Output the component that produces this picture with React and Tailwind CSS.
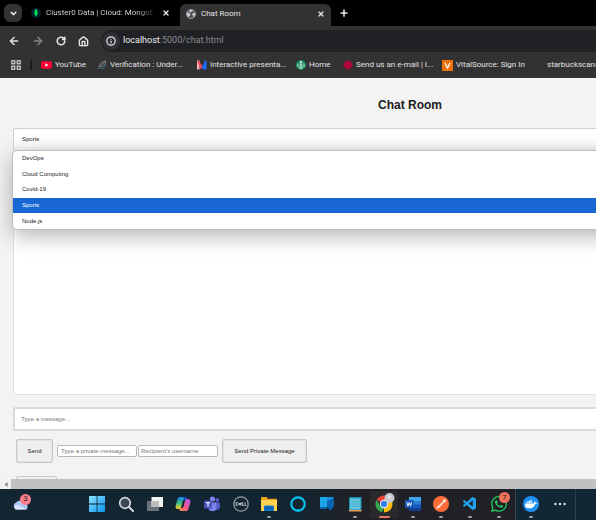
import React from "react";
import { SiWhatsapp, SiDocker } from "react-icons/si";
import { VscVscode } from "react-icons/vsc";
import {
  ArrowLeft,
  ArrowRight,
  RotateCw,
  House,
  Info,
  ChevronDown,
  X,
  Plus,
} from "lucide-react";

const topics = ["DevOps", "Cloud Computing", "Covid-19", "Sports", "Node.js"];

function MongoIcon() {
  return (
    <svg viewBox="0 0 10 10" className="size-[10px] shrink-0" aria-hidden="true">
      <circle cx="5" cy="5" r="5" fill="#03202b" />
      <path d="M5 .8C3.700 2.300 3.300 3.500 3.300 5c0 1.500.8 2.300 1.400 2.900L5 9.300l.3-1.400C6 7.200 6.700 6.400 6.700 5 6.700 3.500 6.200 2.200 5 .8z" fill="#00d95f" />
    </svg>
  );
}

function GlobeIcon() {
  return (
    <svg viewBox="0 0 10 10" className="size-[10px] shrink-0" aria-hidden="true">
      <circle cx="5" cy="5" r="4.500" fill="#4a4d50" stroke="#b4b9bd" strokeWidth=".8" />
      <path d="M1 3.500l2 .2 1.500 1.500-.2 1.300L3.200 7v1.600L1.400 7 .8 5zM4 .8l2.800.1-.6 1.600-1.500.4-.6 1.200-.9-1zM6.400 4.500l2-.8.8 1.300-.6 2-1.500 1-.3-1.700-.8-.8z" fill="#c6cacd" />
    </svg>
  );
}

function AppsIcon() {
  return (
    <svg viewBox="0 0 10 10" className="size-[10px]" fill="none" stroke="#d6d6d6" strokeWidth="1.200" aria-hidden="true">
      <rect x=".8" y=".8" width="3" height="3" />
      <rect x="6.200" y=".8" width="3" height="3" />
      <rect x=".8" y="6.200" width="3" height="3" />
      <rect x="6.200" y="6.200" width="3" height="3" />
    </svg>
  );
}

const bookmarks = [
  {
    label: "YouTube",
    width: "w-[56px]",
    icon: (
      <svg viewBox="0 0 11 10" className="h-[10px] w-[11px] shrink-0" aria-hidden="true">
        <rect x="0" y="1.200" width="11" height="7.600" rx="2" fill="#ff0033" />
        <path d="M4.400 3.200v3.600L7.500 5z" fill="#fff" />
      </svg>
    ),
  },
  {
    label: "Verification : Under...",
    width: "w-[100px]",
    icon: (
      <svg viewBox="0 0 10 10" className="size-[10px] shrink-0" fill="none" aria-hidden="true">
        <path d="M.8 8.800L8.800.8M2.500 7C1.800 4 4.500 2.300 8.800 1c-.5 3.600-2.200 6-5.200 5.500" stroke="#7f8b90" strokeWidth=".9" />
        <path d="M3 8.500h3.500L9 3.500" stroke="#3c7282" strokeWidth=".8" />
      </svg>
    ),
  },
  {
    label: "Interactive presenta...",
    width: "w-[99px]",
    icon: (
      <svg viewBox="0 0 10 10" className="size-[10px] shrink-0" aria-hidden="true">
        <path d="M0 .5h2.500v9H0z" fill="#ffb0b8" />
        <path d="M0 .5h1.600l4 6L4 9.500z" fill="#f7465f" />
        <path d="M4 4.500l1.500 2L8 .5h1.500v9H6z" fill="#196cff" />
      </svg>
    ),
  },
  {
    label: "Home",
    width: "w-[47px]",
    icon: (
      <svg viewBox="0 0 10 10" className="size-[10px] shrink-0" aria-hidden="true">
        <circle cx="5" cy="5" r="5" fill="#15875a" />
        <path d="M3.600 1.800L5 1l1.400.8-.2 1.500H3.800zM3.900 3.800h2.200L6.500 9h-3zM1.600 3.400h.9v4.200l-1.100-1zM7.500 3.400h.9l.2 3.200-1.100 1z" fill="#cce7dc" />
        <path d="M5 4.500V9" stroke="#15875a" strokeWidth=".6" />
      </svg>
    ),
  },
  {
    label: "Send us an e-mail | I...",
    width: "w-[99px]",
    icon: (
      <svg viewBox="0 0 10 10" className="size-[10px] shrink-0" aria-hidden="true">
        <path d="M5 0l1.600 1.500L8.500 1.700l.1 1.800L10 5 8.600 6.500l-.3 1.800-1.800.3L5 10 3.500 8.600l-1.800-.3-.3-1.800L0 5l1.400-1.500.1-1.800 1.900-.2z" fill="#ad0638" />
      </svg>
    ),
  },
  {
    label: "VitalSource: Sign In",
    width: "w-[105px]",
    icon: (
      <svg viewBox="0 0 11 11" className="size-[11px] shrink-0" aria-hidden="true">
        <rect width="11" height="11" fill="#ed7009" />
        <path d="M3 3l2.500 5L8 3" stroke="#fff" strokeWidth="1.300" fill="none" />
      </svg>
    ),
  },
  { label: "starbuckscana", width: "w-[70px]", icon: null },
];

function BrowserChrome() {
  return (
    <header className="shrink-0 bg-[#323232] font-['Roboto','Noto_Sans',sans-serif] text-[#e3e3e3]">
      <div className="flex h-[26px] bg-black pl-1">
        <button aria-label="Search tabs" className="mt-1 flex size-[18px] shrink-0 items-center justify-center rounded-md bg-[#333]">
          <ChevronDown className="size-[9px]" strokeWidth={4} />
        </button>
        <div className="flex w-[158px] shrink-0 items-center gap-[5px] pl-[9px] pr-[10px]">
          <MongoIcon />
          <span className="flex-1 overflow-hidden whitespace-nowrap bg-linear-to-r from-[#dedede] from-85% to-[#333] bg-clip-text text-[8px] text-transparent">
            Cluster0 Data | Cloud: MongoD
          </span>
          <button aria-label="Close Cluster0 Data" className="ml-1">
            <X className="size-[8px]" strokeWidth={4} />
          </button>
        </div>
        <div className="mt-1 flex w-[151px] shrink-0 items-center gap-[5px] rounded-t-md bg-[#323232] pb-[3px] pl-[6px] pr-[6px]">
          <GlobeIcon />
          <span className="flex-1 text-[8px]">Chat Room</span>
          <button aria-label="Close Chat Room">
            <X className="size-[8px]" strokeWidth={4} />
          </button>
        </div>
        <button aria-label="New tab" className="ml-[8px]">
          <Plus className="size-[10px]" strokeWidth={4} />
        </button>
      </div>
      <div className="flex h-[30px] items-center pl-[8px]">
        <nav className="flex shrink-0 items-center gap-[12px]" aria-label="Navigation">
          <button aria-label="Back"><ArrowLeft className="size-[12px]" strokeWidth={3} /></button>
          <button aria-label="Forward" className="text-[#858585]"><ArrowRight className="size-[12px]" strokeWidth={3} /></button>
          <button aria-label="Reload"><RotateCw className="size-[10px]" strokeWidth={4} /></button>
          <button aria-label="Home"><House className="size-[11px]" strokeWidth={3} /></button>
        </nav>
        <div className="ml-[12px] flex h-[22px] flex-1 items-center gap-[3px] rounded-l-full bg-[#202124] pl-[1px]">
          <span className="flex size-[18px] items-center justify-center rounded-full bg-[#303134]">
            <Info className="size-[10px]" strokeWidth={3} />
          </span>
          <span className="text-[9px] text-[#8a8c8f]">
            <span className="text-[#eeeeee]">localhost</span>:5000/chat.html
          </span>
        </div>
      </div>
      <nav className="flex h-[22px] items-start overflow-hidden pl-[11px] pt-1" aria-label="Bookmarks">
        <span className="flex h-[10px] w-[21px] shrink-0 items-center justify-between">
          <AppsIcon />
          <span className="h-[10px] w-[2px] bg-[#1c1c1c]" />
        </span>
        <div className="ml-[9px] flex">
          {bookmarks.map((b) => (
            <a key={b.label} href="#" className={`flex h-[10px] shrink-0 items-center gap-[3px] whitespace-nowrap text-[8px] ${b.width}`}>
              {b.icon}
              {b.label}
            </a>
          ))}
        </div>
      </nav>
    </header>
  );
}

function ChatPage() {
  return (
    <main className="min-h-0 flex-1 overflow-hidden border-t border-[#fafafa] bg-[#f3f3f3] font-['Liberation_Sans',Arial,sans-serif] text-[6px] text-[#222]">
      <div className="w-[820px] px-[13px] pt-[18px]">
        <h1 className="text-center text-[12px] font-bold leading-4 text-[#1c1c1c]">Chat Room</h1>
        <div className="relative mt-[15px]">
          <select
            aria-label="Room"
            defaultValue="Sports"
            className="block h-[23px] w-full appearance-none rounded-xs border border-[#d0d0d0] bg-linear-to-b from-white from-60% to-[#f4f4f4] px-2 text-[6px]"
          >
            {topics.map((t) => (
              <option key={t}>{t}</option>
            ))}
          </select>
          <div role="listbox" aria-label="Rooms" className="absolute inset-x-0 top-full z-10 flex h-[78px] flex-col rounded-sm bg-white shadow-[0_0_0_1px_#bdbdbd,0_6px_22px_rgba(0,0,0,0.32)]">
            {topics.map((t) => (
              <button
                key={t}
                role="option"
                aria-selected={t === "Sports"}
                className={`flex flex-1 items-center px-[9px] text-left ${t === "Sports" ? "bg-[#1967d2] text-white" : ""}`}
              >
                {t}
              </button>
            ))}
          </div>
        </div>
        <div className="mt-[6px] h-[238px] rounded-xs border border-[#e2e2e2] bg-white" />
        <input
          aria-label="Message"
          placeholder="Type a message..."
          className="mt-3 block h-6 w-full rounded-xs border-2 border-[#dadada] bg-white px-[6px] placeholder:text-[#777]"
        />
        <div className="mt-2 flex items-center pl-[3px]">
          <button className="h-6 w-[37px] rounded-xs border border-[#c8c8c8] bg-[#efefef] shadow-[inset_0_0_0_1px_#e2e2e2]">Send</button>
          <input
            aria-label="Private message"
            placeholder="Type a private message..."
            className="ml-[4px] h-3 w-[80px] rounded-xs border border-[#b8b8b8] bg-white px-[3px] placeholder:text-[#777]"
          />
          <input
            aria-label="Recipient"
            placeholder="Recipient's username"
            className="ml-[1px] h-3 w-[80px] rounded-xs border border-[#b8b8b8] bg-white px-[2px] placeholder:text-[#777]"
          />
          <button className="ml-1 h-6 w-[85px] rounded-xs border border-[#c8c8c8] bg-[#efefef] shadow-[inset_0_0_0_1px_#e2e2e2]">
            Send Private Message
          </button>
        </div>
        <button aria-label="Leave room" className="ml-[3px] mt-[13px] block h-6 w-[41px] rounded-xs border border-[#c8c8c8] bg-[#efefef]" />
      </div>
    </main>
  );
}

function WindowsIcon() {
  return (
    <svg viewBox="0 0 16 16" className="size-4" aria-hidden="true">
      <defs>
        <linearGradient id="win" x1="0" y1="0" x2="1" y2="1">
          <stop stopColor="#8ce3ff" />
          <stop offset="1" stopColor="#0693ee" />
        </linearGradient>
      </defs>
      <path d="M0 0h7.600v7.600H0zM8.400 0H16v7.600H8.400zM0 8.400h7.600V16H0zM8.400 8.400H16V16H8.400z" fill="url(#win)" />
    </svg>
  );
}

function SearchIcon() {
  return (
    <svg viewBox="0 0 16 16" className="size-4" fill="none" aria-hidden="true">
      <circle cx="7" cy="7" r="5.300" fill="#3a4853" stroke="#d5d9dc" strokeWidth="1.700" />
      <path d="M11 11l4 4" stroke="#d5d9dc" strokeWidth="2" strokeLinecap="round" />
    </svg>
  );
}

function TaskViewIcon() {
  return (
    <svg viewBox="0 0 16 16" className="size-4" aria-hidden="true">
      <rect x="0" y="5" width="12" height="10" fill="#69727a" />
      <rect x="4.500" y="1" width="11.500" height="10" fill="#f2f2f2" />
      <rect x="4.500" y="5" width="7.500" height="6" fill="#bebebe" />
    </svg>
  );
}

function CopilotIcon() {
  return (
    <svg viewBox="0 0 16 16" className="size-4" aria-hidden="true">
      <defs>
        <linearGradient id="cop1" x1="0" y1="0" x2="0" y2="1">
          <stop stopColor="#1684e8" />
          <stop offset=".5" stopColor="#39bd82" />
          <stop offset="1" stopColor="#ffcf27" />
        </linearGradient>
        <linearGradient id="cop2" x1="1" y1="0" x2="0" y2="1">
          <stop stopColor="#a95cf4" />
          <stop offset=".5" stopColor="#ef5795" />
          <stop offset="1" stopColor="#ff8a3d" />
        </linearGradient>
      </defs>
      <path d="M5 1h5c1.300 0 1.600 1 2 2.200L8 4.500 6.200 11c-.4 1.300-1 2-2.200 2H2.600C.6 13 .2 11 .8 9l1.700-5.700C3 1.700 3.700 1 5 1z" fill="url(#cop1)" />
      <path d="M11 15H6c-1.300 0-1.600-1-2-2.200L8 11.500 9.800 5c.4-1.300 1-2 2.200-2h1.400c2 0 2.400 2 1.800 4l-1.700 5.700C13 14.300 12.300 15 11 15z" fill="url(#cop2)" />
      <path d="M8.700 4.800L6.900 11.200h1.200l1.800-6.400z" fill="#132532" />
      <path d="M8.500 1H10c1.300 0 1.800 1 2.100 2-1.200 0-1.800.7-2.300 1.900L9 4z" fill="#1742c7" />
    </svg>
  );
}

function TeamsIcon() {
  return (
    <svg viewBox="0 0 16 16" className="size-4" aria-hidden="true">
      <circle cx="8.500" cy="3" r="2.600" fill="#7b83eb" />
      <circle cx="13.300" cy="4" r="1.900" fill="#5059c9" />
      <path d="M10 6.500h6v4.300c0 2-1.500 3.200-3.300 3.200H10z" fill="#5059c9" />
      <path d="M4.500 6.500h8v4.800a4 4 0 0 1-8 0z" fill="#7b83eb" />
      <rect x="0" y="4.500" width="8" height="8" rx="1" fill="#4b53bc" />
      <path d="M2 6.700h4M4 6.700v4" stroke="#e8eaff" strokeWidth="1.200" />
    </svg>
  );
}

function DellIcon() {
  return (
    <svg viewBox="0 0 16 16" className="size-4" fill="none" aria-hidden="true">
      <circle cx="8" cy="8" r="7.200" stroke="#929ca4" strokeWidth="1.300" />
      <path d="M3 6.500v3h1c2 0 2-3 0-3zM9 7L7 8l2 1.200M7 8l1.500-1.200M9.700 6.300v3.200h1.500M12 6.300v3.200h1.300M5.800 8L7.600 6.800M5.800 8l1.800 1.400" stroke="#b3bbc1" strokeWidth="1" />
    </svg>
  );
}

function FolderIcon() {
  return (
    <svg viewBox="0 0 16 16" className="size-4" aria-hidden="true">
      <path d="M0 2c0-.7.4-1 1-1h4.500L7 2.800h8c.6 0 1 .4 1 1V13H0z" fill="#e9a21b" />
      <path d="M0 4h16v11H0z" fill="#ffd34f" />
      <path d="M3 15v-4c0-1 .6-1.500 1.500-1.500h7c.9 0 1.500.5 1.500 1.500v4z" fill="#0f73c9" />
      <path d="M4.500 12h7" stroke="#0b4e94" />
    </svg>
  );
}

function AlexaIcon() {
  return (
    <svg viewBox="0 0 16 16" className="size-4" fill="none" aria-hidden="true">
      <circle cx="8" cy="8" r="6.700" stroke="#05c3ef" strokeWidth="2.200" />
      <path d="M7 13.500h2.500v2H7z" fill="#05c3ef" />
    </svg>
  );
}

function DesktopIcon() {
  return (
    <svg viewBox="0 0 16 16" className="size-4" aria-hidden="true">
      <path d="M1 1h13.500v10H1z" fill="#1390dd" />
      <path d="M1 11h7v2H1zM6 6l8.500-4v9L11 15z" fill="#0864ae" />
      <path d="M1 1h7v10H1z" fill="#1ba5e8" />
    </svg>
  );
}

function NotepadIcon() {
  return (
    <svg viewBox="0 0 16 16" className="size-4" aria-hidden="true">
      <rect x="2" y="1" width="12.500" height="14" rx=".5" fill="#1e8fb0" />
      <rect x="3" y="2.500" width="10.500" height="11" fill="#62c4df" />
      <path d="M4.500 5.500h7.500M4.500 8h7.500M4.500 10.500h7.500" stroke="#43a7c5" strokeWidth=".8" />
      <path d="M2 14h12.500v1.500H2z" fill="#e79b5a" />
    </svg>
  );
}

function ChromeIcon() {
  return (
    <svg viewBox="0 0 18 18" className="size-[18px] overflow-visible" aria-hidden="true">
      <path d="M9 9L1.640 4.750A8.500 8.500 0 0 1 16.360 4.750z" fill="#ea4335" />
      <path d="M9 9V17.500A8.500 8.500 0 0 0 16.360 4.750H9z" fill="#fbbc04" />
      <path d="M1.640 4.750L5.400 11.200 9 13l-1.800 4.300A8.500 8.500 0 0 1 1.640 4.750z" fill="#34a853" />
      <circle cx="9" cy="9" r="4.200" fill="#fff" />
      <circle cx="9" cy="9" r="3.200" fill="#347fe9" />
      <circle cx="14.500" cy="3" r="5" fill="#c5c8ce" />
      <circle cx="14.500" cy="2" r="2" fill="#dce0e8" />
    </svg>
  );
}

function WordIcon() {
  return (
    <svg viewBox="0 0 16 16" className="size-4" aria-hidden="true">
      <path d="M4 1h12v14H4z" fill="#185abd" />
      <path d="M4 1h12v4H4z" fill="#41a5ee" />
      <path d="M4 5h12v3.500H4z" fill="#2b7cd3" />
      <path d="M4 12h12v3H4z" fill="#103f91" />
      <rect x="0" y="4" width="8.500" height="8" rx=".5" fill="#1856b5" />
      <path d="M1.800 6.200l1.100 3.900 1.300-3.500 1.300 3.500 1.100-3.900" fill="none" stroke="#fff" strokeWidth=".9" />
    </svg>
  );
}

function PostmanIcon() {
  return (
    <svg viewBox="0 0 16 16" className="size-4" aria-hidden="true">
      <circle cx="8" cy="8" r="8" fill="#ff6c37" />
      <path d="M3 13l1.500-2.500L10.500 5l1.200 1L6 11.800z" fill="#fff" />
      <circle cx="11.600" cy="4.500" r="1.600" fill="#ffe4d9" />
      <path d="M5 11l5.500-5" stroke="#ff6c37" strokeWidth=".4" />
    </svg>
  );
}

function WhatsAppIcon() {
  return (
    <span className="relative flex">
      <SiWhatsapp className="size-4 text-[#24c45d]" />
      <span className="absolute -right-[3px] -top-[4px] flex size-[11px] items-center justify-center rounded-full bg-[#f1735d] text-[8px] leading-none text-[#3d2020]">7</span>
    </span>
  );
}

function DockerIcon() {
  return (
    <span className="flex size-4 items-center justify-center rounded-full bg-[#1f91f3]">
      <SiDocker className="size-[12px] text-white" />
    </span>
  );
}

const apps = [
  { name: "Start", icon: <WindowsIcon /> },
  { name: "Search", icon: <SearchIcon /> },
  { name: "Task view", icon: <TaskViewIcon /> },
  { name: "Copilot", icon: <CopilotIcon /> },
  { name: "Teams", icon: <TeamsIcon /> },
  { name: "Dell", icon: <DellIcon /> },
  { name: "File Explorer", icon: <FolderIcon />, open: true },
  { name: "Alexa", icon: <AlexaIcon /> },
  { name: "Remote desktop", icon: <DesktopIcon /> },
  { name: "Notepad", icon: <NotepadIcon />, open: true },
  { name: "Chrome", icon: <ChromeIcon />, active: true },
  { name: "Word", icon: <WordIcon />, open: true },
  { name: "Postman", icon: <PostmanIcon />, open: true },
  { name: "Visual Studio Code", icon: <VscVscode className="size-4 text-[#219ee8]" />, open: true },
  { name: "WhatsApp", icon: <WhatsAppIcon />, open: true },
];

function TaskButton({ app }) {
  return (
    <button aria-label={app.name} className={`relative flex h-[27px] flex-1 items-center justify-center rounded-sm pb-[1px] ${app.active ? "bg-[#2a2a2c]" : ""}`}>
      {app.icon}
      {app.open && <span className="absolute bottom-0 h-[2px] w-[4px] rounded-full bg-[#9b9fa3]" />}
      {app.active && <span className="absolute bottom-0 h-[2px] w-[11px] rounded-full bg-[#e07a63]" />}
    </button>
  );
}

function Taskbar() {
  return (
    <footer className="flex h-[31px] shrink-0 items-center bg-linear-to-r from-[#122531] from-50% via-[#202126] via-60% to-[#202126] font-['Roboto','Noto_Sans',sans-serif]">
      <button aria-label="Weather" className="relative ml-3 h-4 w-[18px] shrink-0">
        <svg viewBox="0 0 18 16" className="h-4 w-[18px]" aria-hidden="true">
          <path d="M4 12.500a3.800 3.800 0 0 1 0-7 5 5 0 0 1 8.500 1A3.200 3.200 0 0 1 14 12.500z" fill="#a9c6f6" />
          <path d="M3.500 12.500a2.800 2.800 0 0 1 .6-4.500c3 .5 6 2 11 4.500z" fill="#d9e6fc" />
        </svg>
        <span className="absolute -right-[1px] -top-[3px] flex size-[11px] items-center justify-center rounded-full bg-[#fb7f8d] text-[8px] leading-none text-[#33191e]">3</span>
      </button>
      <nav aria-label="Apps" className="ml-[53px] flex w-[430px] shrink-0">
        {apps.map((a) => (
          <TaskButton key={a.name} app={a} />
        ))}
      </nav>
      <div className="ml-[2px] flex h-full flex-1 items-center border-l border-[#3b4852] bg-[#122736]">
        <div className="flex h-full w-[60px] items-center border-r border-[#2c3f4c]">
          <TaskButton app={{ name: "Docker", icon: <DockerIcon />, open: true }} />
          <TaskButton
            app={{
              name: "More",
              icon: (
                <svg viewBox="0 0 12 4" className="h-1 w-3" fill="#e4e7e9" aria-hidden="true">
                  <circle cx="1.500" cy="2" r="1.200" />
                  <circle cx="6" cy="2" r="1.200" />
                  <circle cx="10.500" cy="2" r="1.200" />
                </svg>
              ),
            }}
          />
        </div>
      </div>
    </footer>
  );
}

export default function App() {
  return (
    <div className="flex h-screen flex-col overflow-hidden bg-[#f3f3f3]">
      <BrowserChrome />
      <ChatPage />
      <div className="flex h-[10px] shrink-0 items-center bg-[#f1f1f1]">
        <button aria-label="Scroll left" className="flex w-[11px] items-center justify-center">
          <svg viewBox="0 0 4 6" className="h-[5px] w-[4px]" fill="#8b8b8b" aria-hidden="true">
            <path d="M4 0v6L0 3z" />
          </svg>
        </button>
        <div className="h-full flex-1 bg-[#c1c1c1]" />
      </div>
      <Taskbar />
    </div>
  );
}
